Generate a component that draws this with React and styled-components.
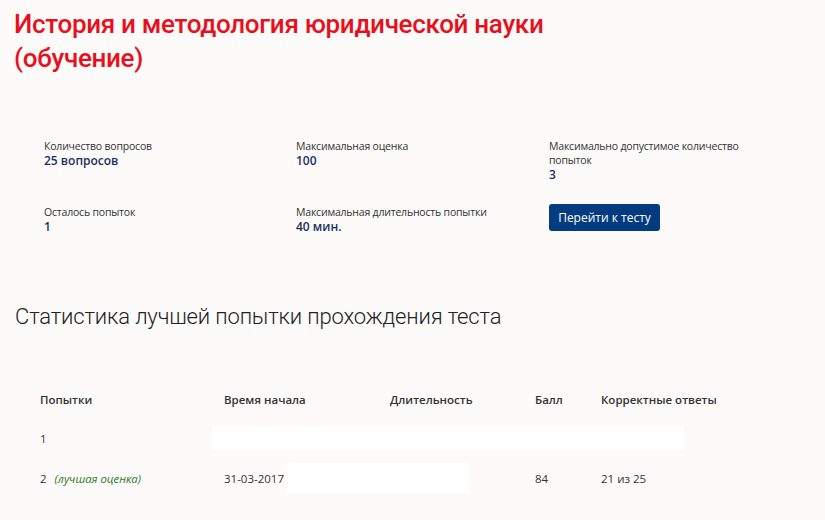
import React from "react";
import styled, { createGlobalStyle } from "styled-components";

const GlobalStyle = createGlobalStyle`
  html, body {
    margin: 0;
    padding: 0;
    background: #fcfbfa;
  }
  body {
    font-family: "Open Sans", "Noto Sans", sans-serif;
  }
`;

const Page = styled.div`
  padding: 7px 14px 0 14px;
`;

const Title = styled.h1`
  margin: 0;
  color: #e8101c;
  font-family: Roboto, "Noto Sans", sans-serif;
  font-weight: 500;
  font-size: 26px;
  line-height: 34px;
  letter-spacing: -0.3px;
  max-width: 560px;
`;

const InfoGrid = styled.div`
  display: grid;
  grid-template-columns: 252px 253px 190px;
  row-gap: 22px;
  margin: 64px 0 0 30px;
`;

const InfoItem = styled.div`
  display: flex;
  flex-direction: column;
`;

const Label = styled.div`
  font-size: 10.5px;
  line-height: 14px;
  letter-spacing: -0.2px;
  color: #333;
`;

const Value = styled.div`
  font-size: 12px;
  line-height: 16px;
  font-weight: 600;
  color: #1b2f5e;
`;

const Button = styled.button`
  align-self: flex-start;
  width: 111px;
  height: 27px;
  border: none;
  border-radius: 3px;
  background: #033b80;
  color: #fff;
  font-family: "Open Sans", sans-serif;
  font-size: 12px;
  padding: 0;
  margin-top: -1px;
`;

const Subtitle = styled.h2`
  margin: 67px 0 0 1px;
  font-family: Roboto, sans-serif;
  font-weight: 300;
  font-size: 22px;
  line-height: 30px;
  letter-spacing: -0.15px;
  color: #222;
`;

const Table = styled.table`
  border-collapse: collapse;
  margin: 48px 0 0 26px;
  font-size: 11.5px;
  color: #333;
`;

const Th = styled.th`
  text-align: left;
  font-weight: 600;
  width: ${(p) => p.w}px;
  padding: 0;
  height: 38px;
  vertical-align: middle;
`;

const Td = styled.td`
  padding: 0;
  height: 40px;
  vertical-align: middle;
`;

const Best = styled.span`
  margin-left: 8px;
  font-style: italic;
  font-size: 11.3px;
  color: #2a7a1e;
`;

const Blank = styled.div`
  background: #fff;
  height: ${(p) => p.h}px;
  width: ${(p) => p.w}px;
  margin-left: ${(p) => p.ml || 0}px;
`;

const info = [
  { label: "Количество вопросов", value: "25 вопросов" },
  { label: "Максимальная оценка", value: "100" },
  { label: "Максимально допустимое количество попыток", value: "3" },
  { label: "Осталось попыток", value: "1" },
  { label: "Максимальная длительность попытки", value: "40 мин." },
];

export default function App() {
  return (
    <>
      <GlobalStyle />
      <Page>
        <Title>История и методология юридической науки (обучение)</Title>
        <InfoGrid>
          {info.map((i) => (
            <InfoItem key={i.label}>
              <Label>{i.label}</Label>
              <Value>{i.value}</Value>
            </InfoItem>
          ))}
          <InfoItem>
            <Button>Перейти к тесту</Button>
          </InfoItem>
        </InfoGrid>
        <Subtitle>Статистика лучшей попытки прохождения теста</Subtitle>
        <Table>
          <thead>
            <tr>
              <Th w={184}>Попытки</Th>
              <Th w={166}>Время начала</Th>
              <Th w={145}>Длительность</Th>
              <Th w={66}>Балл</Th>
              <Th w={150}>Корректные ответы</Th>
            </tr>
          </thead>
          <tbody>
            <tr>
              <Td>1</Td>
              <Td colSpan={4}>
                <Blank w={472} h={24} ml={-12} />
              </Td>
            </tr>
            <tr>
              <Td>
                2<Best>(лучшая оценка)</Best>
              </Td>
              <Td>31-03-2017</Td>
              <Td>
                <Blank w={184} h={30} ml={-105} />
              </Td>
              <Td>84</Td>
              <Td>21 из 25</Td>
            </tr>
          </tbody>
        </Table>
      </Page>
    </>
  );
}
